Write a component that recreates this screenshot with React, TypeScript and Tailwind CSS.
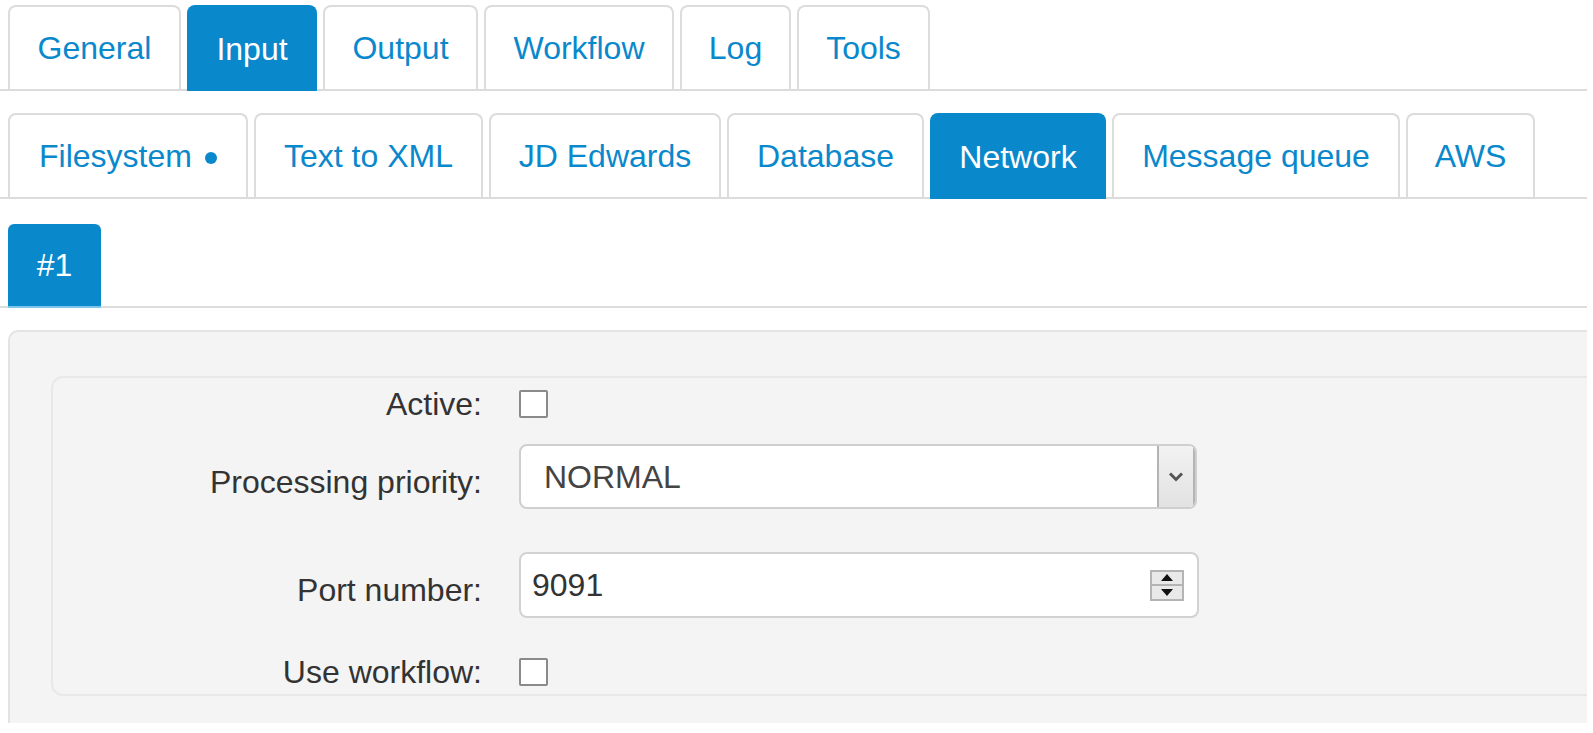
import React from "react";

type Tab = { label: string; cls: string; active?: boolean; dot?: boolean };

const row1: Tab[] = [
  { label: "General", cls: "w-[173px]" },
  { label: "Input", cls: "w-[130px]", active: true },
  { label: "Output", cls: "w-[155px]" },
  { label: "Workflow", cls: "w-[190px]" },
  { label: "Log", cls: "w-[111px]" },
  { label: "Tools", cls: "w-[133px]" },
];

const row2: Tab[] = [
  { label: "Filesystem", cls: "w-[240px]", dot: true },
  { label: "Text to XML", cls: "w-[229px]" },
  { label: "JD Edwards", cls: "w-[232px]" },
  { label: "Database", cls: "w-[197px]" },
  { label: "Network", cls: "w-[176px]", active: true },
  { label: "Message queue", cls: "w-[288px]" },
  { label: "AWS", cls: "w-[129px]" },
];

function TabItem({ t }: { t: Tab }) {
  const base =
    "flex items-center justify-center rounded-t-[8px] whitespace-nowrap shrink-0 ";
  const state = t.active
    ? "h-[86px] -mb-[2px] bg-[#0a88cc] text-white border-2 border-b-0 border-[#0a88cc]"
    : "h-[84px] bg-white text-[#0a88cc] border-2 border-b-0 border-[#dcdcdc]";
  return (
    <div className={base + state + " " + t.cls}>
      <span>{t.label}</span>
      {t.dot && (
        <span className="inline-block w-[12px] h-[12px] rounded-full bg-[#0a88cc] ml-[13px] mt-[4px]" />
      )}
    </div>
  );
}

function Checkbox() {
  return (
    <div className="ml-[37px] w-[29px] h-[28px] border-2 border-[#8a8a8a] bg-white rounded-[2px]" />
  );
}

export default function App() {
  return (
    <div className="w-[1587px] h-[733px] overflow-hidden bg-white font-['Liberation_Sans',Arial,sans-serif] text-[32px] leading-none">
      {/* Row 1 tabs */}
      <div className="pt-[5px] pl-[8px] flex items-start gap-[6px] border-b-2 border-[#dcdcdc]">
        {row1.map((t) => (
          <TabItem key={t.label} t={t} />
        ))}
      </div>

      {/* Row 2 tabs */}
      <div className="mt-[22px] pl-[8px] flex items-start gap-[6px] border-b-2 border-[#dcdcdc]">
        {row2.map((t) => (
          <TabItem key={t.label} t={t} />
        ))}
      </div>

      {/* Row 3 tabs */}
      <div className="mt-[25px] pl-[8px] flex items-start border-b-2 border-[#dcdcdc]">
        <div className="w-[93px] h-[84px] -mb-[2px] flex items-center justify-center rounded-t-[6px] bg-[#0a88cc] text-white border-b-2 border-[#7fc4ea]">
          #1
        </div>
      </div>

      {/* Panel */}
      <div className="mt-[22px] ml-[8px] h-[393px] bg-[#f4f4f4] border-t-2 border-l-2 border-[#e3e3e3] rounded-tl-[10px] pl-[41px] pt-[44px] overflow-hidden">
        <div className="w-[1600px] h-[320px] border-2 border-[#e8e8e8] rounded-[12px] pt-[12px] text-[#333]">
          {/* Active */}
          <div className="flex items-center h-[28px]">
            <div className="w-[429px] text-right">Active:</div>
            <Checkbox />
          </div>

          {/* Processing priority */}
          <div className="flex items-center h-[65px] mt-[26px]">
            <div className="w-[429px] text-right pt-[10px]">Processing priority:</div>
            <div className="ml-[37px] w-[678px] h-[65px] bg-white border-2 border-[#cfcfcf] rounded-[8px] flex items-stretch overflow-hidden">
              <div className="flex-1 flex items-center pl-[23px] text-[#444]">NORMAL</div>
              <div className="w-[38px] bg-gradient-to-b from-[#f2f2f2] to-[#e2e2e2] border-l-2 border-r-2 border-[#b4b4b4] flex items-center justify-center">
                <svg width="18" height="12" viewBox="0 0 18 12">
                  <polyline
                    points="3,2.5 9,8.5 15,2.5"
                    fill="none"
                    stroke="#555"
                    strokeWidth="3"
                  />
                </svg>
              </div>
            </div>
          </div>

          {/* Port number */}
          <div className="flex items-center h-[66px] mt-[43px]">
            <div className="w-[429px] text-right pt-[10px]">Port number:</div>
            <div className="ml-[37px] w-[680px] h-[66px] bg-white border-2 border-[#d2d2d2] rounded-[8px] flex items-center">
              <div className="flex-1 pl-[11px] text-[#333]">9091</div>
              <div className="mr-[13px] w-[34px] h-[31px] border-2 border-[#b4b4b4] bg-[#e9e9e9] flex flex-col">
                <div className="flex-1 flex items-center justify-center border-b-2 border-[#b4b4b4]">
                  <svg width="12" height="7" viewBox="0 0 12 7">
                    <polygon points="6,0 12,7 0,7" fill="#111" />
                  </svg>
                </div>
                <div className="flex-1 flex items-center justify-center">
                  <svg width="12" height="7" viewBox="0 0 12 7">
                    <polygon points="0,0 12,0 6,7" fill="#111" />
                  </svg>
                </div>
              </div>
            </div>
          </div>

          {/* Use workflow */}
          <div className="flex items-center h-[28px] mt-[40px]">
            <div className="w-[429px] text-right">Use workflow:</div>
            <Checkbox />
          </div>
        </div>
      </div>
    </div>
  );
}
